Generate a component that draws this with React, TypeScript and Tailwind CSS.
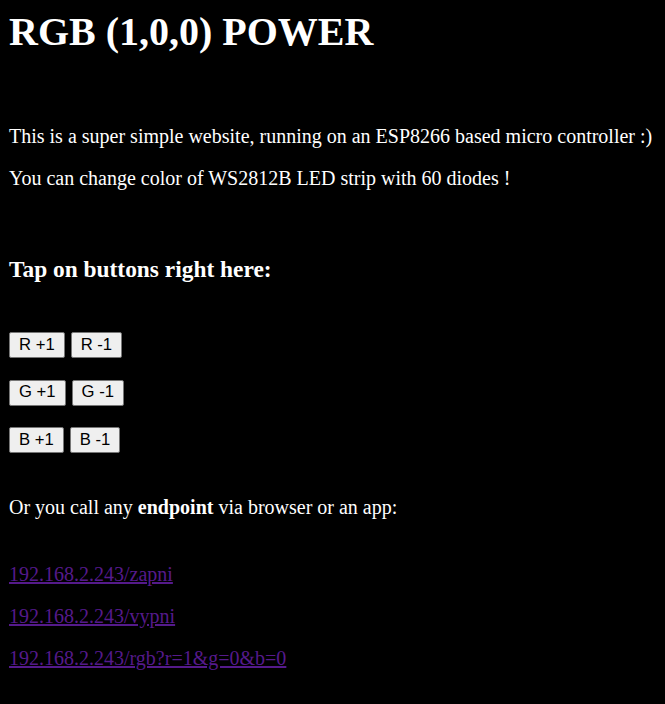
const rows = [
  ["R +1", "R -1"],
  ["G +1", "G -1"],
  ["B +1", "B -1"],
];

const links = [
  "192.168.2.243/zapni",
  "192.168.2.243/vypni",
  "192.168.2.243/rgb?r=1&g=0&b=0",
];

export default function App() {
  return (
    <div
      className="min-h-screen bg-black text-white px-[9px] pt-[10px] pb-[20px]"
      style={{ fontFamily: '"Liberation Serif", "Times New Roman", serif' }}
    >
      <h1 className="text-[40px] leading-[44px] font-bold">RGB (1,0,0) POWER</h1>

      <p className="mt-[71px] text-[20px] leading-[22px]">
        This is a super simple website, running on an ESP8266 based micro controller :)
      </p>
      <p className="mt-[20px] text-[20px] leading-[22px]">
        You can change color of WS2812B LED strip with 60 diodes !
      </p>

      <h3 className="mt-[67px] text-[23.4px] leading-[27px] font-bold">Tap on buttons right here:</h3>

      <div className="mt-[49px] flex flex-col gap-[21.5px]">
        {rows.map((r, i) => (
          <div key={i} className="flex gap-[6px]">
            {r.map((label) => (
              <button
                key={label}
                className="h-[26px] px-[9px] bg-[#efefef] border border-[#767676] rounded-[2px] text-black text-[16.67px] leading-none"
                style={{ fontFamily: '"Liberation Sans", Arial, sans-serif' }}
              >
                {label}
              </button>
            ))}
          </div>
        ))}
      </div>

      <p className="mt-[43px] text-[20px] leading-[22px]">
        Or you call any <b>endpoint</b> via browser or an app:
      </p>

      <div className="mt-[45px] flex flex-col gap-[20px]">
        {links.map((l) => (
          <p key={l} className="text-[20px] leading-[22px]">
            <a href="#" className="text-[#551a8b] underline">
              {l}
            </a>
          </p>
        ))}
      </div>
    </div>
  );
}
